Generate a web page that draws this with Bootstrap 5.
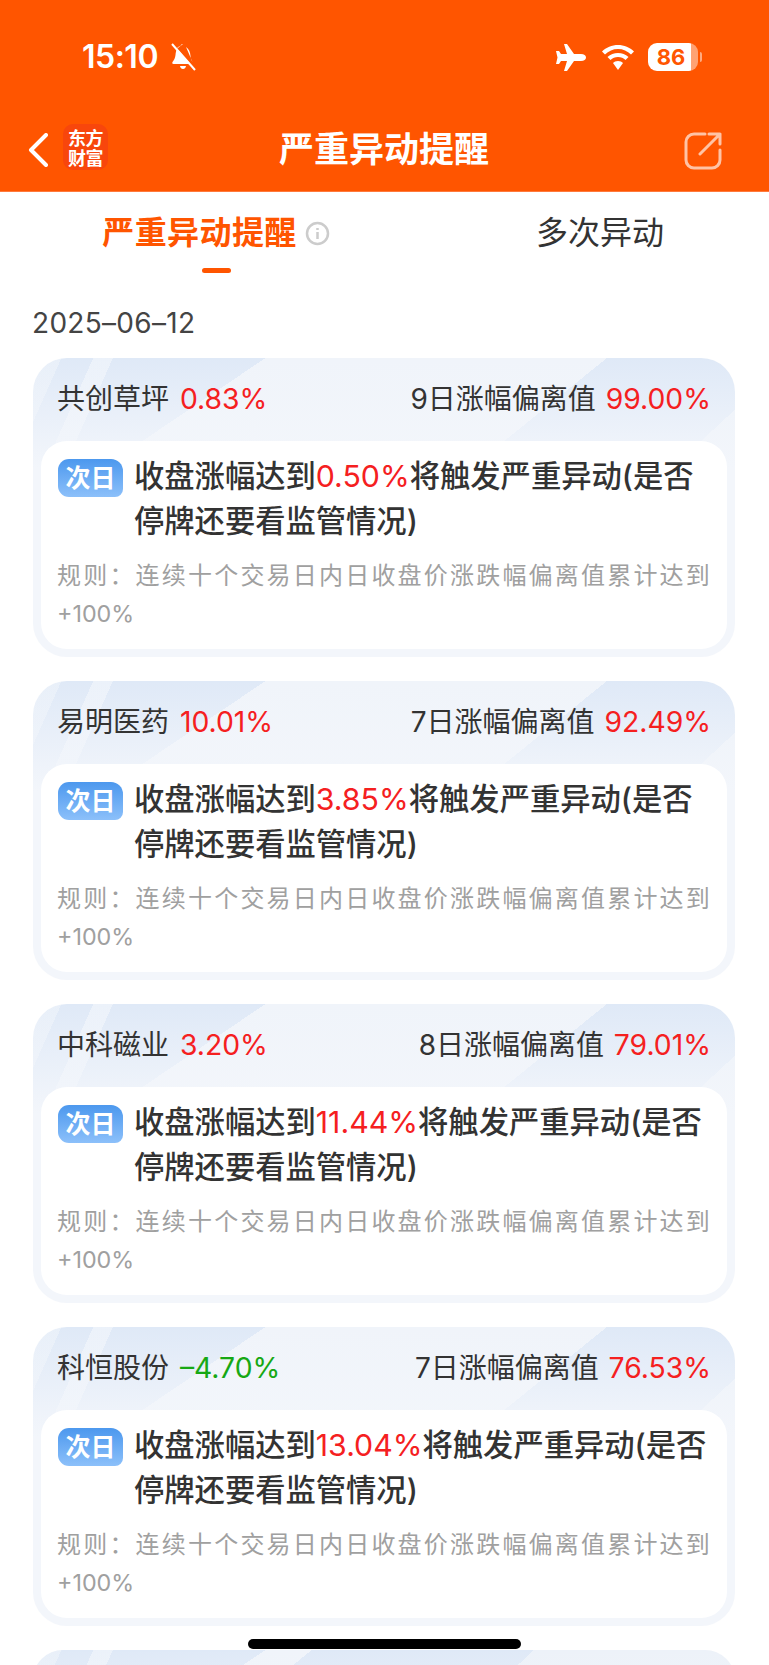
<!DOCTYPE html>
<html lang="zh-CN">
<head>
    <meta charset="UTF-8">
    <meta name="viewport" content="width=device-width, initial-scale=1.0">
    <title>严重异动提醒</title>
    <link href="https://cdn.jsdelivr.net/npm/bootstrap@5.3.3/dist/css/bootstrap.min.css" rel="stylesheet">
    <style>
        html, body { height: 100%; overflow: hidden; }
        body { font-family: Inter, "Noto Sans CJK SC", sans-serif; background: #fff; color: #333; }
        .app-header { background: #ff5500; height: 192px; color: #fff; border-bottom: 1px solid #ff7a3d; }
        .status-row { height: 114px; padding: 43px 67px 0 82px; }
        .status-time { font-size: 32px; font-weight: 600; line-height: 28px; letter-spacing: -.5px; width: 88px; }
        .title-row { height: 77px; padding: 0 47px 0 28px; }
        .app-title { font-size: 35px; font-weight: 700; line-height: 44px; left: 279px; top: 13px; }
        .back-icon { margin-top: 19px; }
        .share-icon { margin-top: 18px; }
        .brand-logo { width: 45px; height: 46px; margin: 10px 0 0 15px; padding-top: 3px; border-radius: 10px; background: #f8460c; font-family: "Noto Sans CJK SC", sans-serif; font-size: 18px; font-weight: 700; line-height: 20px; text-align: center; letter-spacing: -.5px; }
        .batt { width: 50px; height: 28px; border-radius: 9px; background: linear-gradient(90deg, #fff 86%, rgba(255,255,255,.45) 86%); color: #ff5500; font-size: 22px; font-weight: 700; line-height: 28px; text-align: center; padding-right: 4px; }
        .batt-nub { width: 2px; height: 10px; margin-left: 2px; background: rgba(255,255,255,.5); border-radius: 0 2px 2px 0; }
        .wifi-icon { margin: 0 14px 0 16px; }

        .tab-row { height: 90px; padding-left: 24px; }
        .tab-item { flex: 0 0 384px; font-size: 32px; line-height: 44px; padding-top: 19px; color: #333; text-align: center; }
        .tab-on { color: #ff5500; font-weight: 700; letter-spacing: .4px; }
        .tab-bar { width: 29px; height: 5px; border-radius: 3px; background: #ff5500; margin: 13px auto 0; }

        .date-line { font-size: 28px; line-height: 34px; color: #444; padding: 24px 32px 18px; letter-spacing: .3px; }

        .alert-card { margin: 0 34px 24px 33px; height: 299px; border-radius: 34px; padding: 0 8px 8px;
            background:
                linear-gradient(180deg, rgba(243,246,251,0) 0, #f3f6fb 110px),
                linear-gradient(317deg, #edf2f9 181px, transparent 181px),
                linear-gradient(321deg, #dfe9f7 313px, transparent 313px),
                linear-gradient(114deg, transparent 55px, rgba(255,255,255,.4) 55px 73px, transparent 73px),
                linear-gradient(114deg, rgba(255,255,255,.3) 26px, transparent 26px),
                linear-gradient(146deg, #dfe9f7 130px, transparent 130px),
                #f0f4fa; }
        .alert-stub { height: 60px; margin-bottom: 0; }
        .card-head { height: 83px; padding: 0 16px; font-size: 28px; }
        .card-head span { font-size: 28.3px; margin-left: 2px; }
        .card-head .name-pct { margin-left: 3px; }
        .up { color: #f5201f; }
        .down { color: #17a814; }
        .card-inner { background: #fff; border-radius: 26px; height: 208px; padding: 18px 10px 0 16px; }
        .day-tag { flex: 0 0 65px; height: 38px; margin-left: 1px; border-radius: 11px 12px 8px 11px; background: linear-gradient(180deg, #4c98ee, #8cc0fa); color: #fff; font-size: 25px; font-weight: 700; line-height: 38px; text-align: center; margin-right: 11px; }
        .main-txt { font-size: 30.3px; line-height: 45px; font-weight: 500; color: #333; margin-top: -5px; }
        .main-txt span { font-weight: 400; }
        .rule-txt { font-size: 24px; line-height: 38px; color: #a0a0a0; letter-spacing: 2.2px; margin-top: 13px; }
        .rule-txt span { font-size: 23.3px; letter-spacing: 0; }

        .home-bar { position: fixed; left: 248px; top: 1639px; width: 273px; height: 10px; background: #000; border-radius: 5px; }
    </style>
</head>
<body>
    <div class="app-header">
        <div class="status-row d-flex align-items-start">
            <div class="status-time">15:10</div>
            <svg width="27" height="28" viewBox="0 0 27 28" fill="#fff"><path d="M13 1c-1.500 0-2.500 1-3 2.500C6.500 5 6 8 5.500 12c-.3 3-1.500 5-3 7-.5 1-.2 2 1 2h17L7 5.500C8 3 10 4 13 1zM22.500 19c-1-1.500-1.800-3.500-2-6-.3-4-1.500-7-4.500-9L22.500 19zM10 23h6c-.3 2-1.500 3-3 3s-2.700-1-3-3z"/><path d="M2 1l23 26" stroke="#fff" stroke-width="2"/></svg>
            <div class="ms-auto d-flex align-items-center">
                <svg width="30" height="27" viewBox="0 0 30 27" fill="#fff"><path d="M8 0h3l7 10h7c3 0 5 1.500 5 3.500S28 17 25 17h-7l-7 10H8l3-10H5l-2 3H0l1.500-6.500L0 7h3l2 3h6z"/></svg>
                <svg class="wifi-icon" width="32" height="25" viewBox="0 0 32 25" fill="#fff"><path d="M16 0c6 0 12 2.500 16 6.500l-3 3C25.500 6 21 4 16 4S6.500 6 3 9.500l-3-3C4 2.500 10 0 16 0z"/><path d="M16 8c4 0 7.500 1.500 10.500 4l-3 3C21.500 13 19 12 16 12s-5.500 1-7.500 3l-3-3C8.500 9.500 12 8 16 8z"/><path d="M16 16c2 0 4 .7 5 2l-5 7-5-7c1-1.300 3-2 5-2z"/></svg>
                <div class="batt">86</div>
                <div class="batt-nub"></div>
            </div>
        </div>
        <div class="title-row d-flex align-items-start position-relative">
            <svg class="back-icon" width="20" height="34" viewBox="0 0 20 34" fill="none" stroke="#fff" stroke-width="4" stroke-linecap="round" stroke-linejoin="round"><path d="M18 2L3 17l15 15"/></svg>
            <div class="brand-logo">东方<br>财富</div>
            <div class="app-title position-absolute">严重异动提醒</div>
            <svg class="share-icon ms-auto" width="38" height="38" viewBox="0 0 38 38" fill="none" stroke="#fff" stroke-opacity=".65" stroke-width="3" stroke-linecap="round" stroke-linejoin="round"><path d="M21 2H10a8 8 0 0 0-8 8v18a8 8 0 0 0 8 8h18a8 8 0 0 0 8-8V18"/><path d="M16 22L36 2M25 2h11v10"/></svg>
        </div>
    </div>

    <div class="tab-row d-flex">
        <div class="tab-item tab-on">
            <div class="d-inline-flex align-items-center">严重异动提醒
                <svg class="ms-2" width="25" height="25" viewBox="0 0 25 25"><circle cx="12.500" cy="12.500" r="10.500" fill="none" stroke="#ccc" stroke-width="2.500"/><path d="M12.500 11v7M12.500 7v2" stroke="#ccc" stroke-width="2.500"/></svg>
            </div>
            <div class="tab-bar"></div>
        </div>
        <div class="tab-item">多次异动</div>
    </div>

    <div class="date-line">2025–06–12</div>

    <div id="cardList"></div>
    <div class="alert-card alert-stub"></div>

    <div class="home-bar"></div>

    <script>
        const stocks = [
            { name: '共创草坪', pct: '0.83%', cls: 'up', days: 9, dev: '99.00%', need: '0.50%' },
            { name: '易明医药', pct: '10.01%', cls: 'up', days: 7, dev: '92.49%', need: '3.85%' },
            { name: '中科磁业', pct: '3.20%', cls: 'up', days: 8, dev: '79.01%', need: '11.44%' },
            { name: '科恒股份', pct: '–4.70%', cls: 'down', days: 7, dev: '76.53%', need: '13.04%' }
        ];

        document.getElementById('cardList').innerHTML = stocks.map(s => `
            <div class="alert-card">
                <div class="card-head d-flex align-items-center justify-content-between">
                    <div>${s.name} <span class="name-pct ${s.cls}">${s.pct}</span></div>
                    <div>${s.days}日涨幅偏离值 <span class="up">${s.dev}</span></div>
                </div>
                <div class="card-inner">
                    <div class="d-flex">
                        <div class="day-tag">次日</div>
                        <div class="main-txt">收盘涨幅达到<span class="up">${s.need}</span>将触发严重异动(是否停牌还要看监管情况)</div>
                    </div>
                    <div class="rule-txt">规则：连续十个交易日内日收盘价涨跌幅偏离值累计达到<span>+100%</span></div>
                </div>
            </div>
        `).join('');
    </script>
    <script src="https://cdn.jsdelivr.net/npm/bootstrap@5.3.3/dist/js/bootstrap.bundle.min.js"></script>
</body>
</html>
